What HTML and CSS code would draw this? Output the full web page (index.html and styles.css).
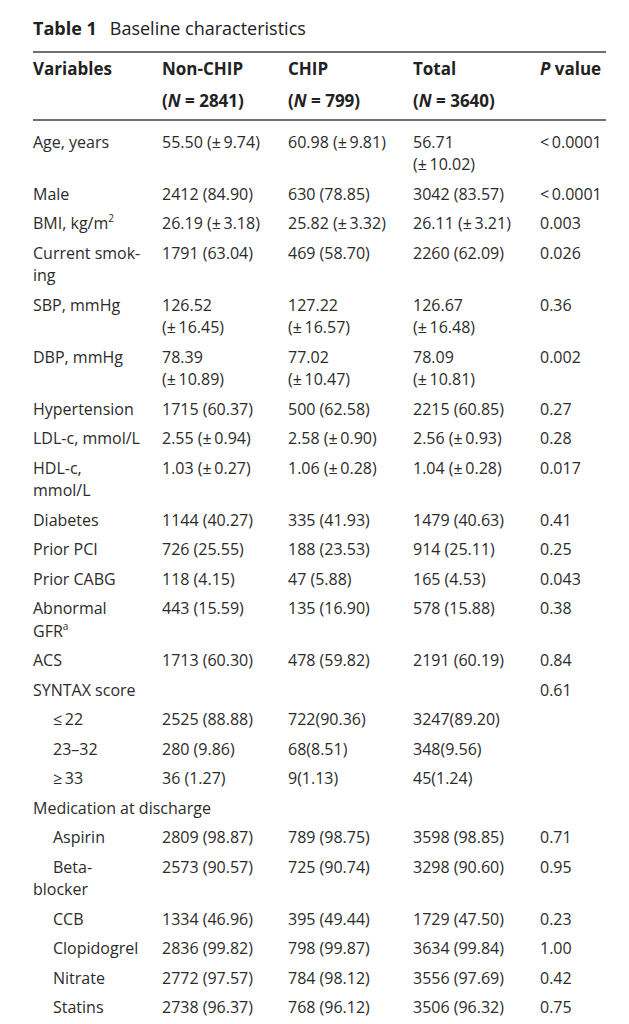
FILE: index.html
```html
<!DOCTYPE html>
<html lang="en">
<head>
<meta charset="utf-8">
<title>Table 1 Baseline characteristics</title>
<link rel="stylesheet" href="styles.css">
</head>
<body>
<div class="page">
  <h1 class="caption"><span class="label">Table 1</span>Baseline characteristics</h1>
  <table class="data">
    <colgroup>
      <col class="c-var">
      <col class="c-num">
      <col class="c-num2">
      <col class="c-num3">
      <col class="c-p">
    </colgroup>
    <thead>
      <tr>
        <th>Variables</th>
        <th>Non-CHIP<br>(<i>N</i> = 2841)</th>
        <th>CHIP<br>(<i>N</i> = 799)</th>
        <th>Total<br>(<i>N</i> = 3640)</th>
        <th><i>P</i> value</th>
      </tr>
    </thead>
    <tbody>
      <tr class="first"><td>Age, years</td><td>55.50 (±&thinsp;9.74)</td><td>60.98 (±&thinsp;9.81)</td><td>56.71<br>(±&thinsp;10.02)</td><td>&lt;&thinsp;0.0001</td></tr>
      <tr><td>Male</td><td>2412 (84.90)</td><td>630 (78.85)</td><td>3042 (83.57)</td><td>&lt;&thinsp;0.0001</td></tr>
      <tr><td>BMI, kg/m<sup>2</sup></td><td>26.19 (±&thinsp;3.18)</td><td>25.82 (±&thinsp;3.32)</td><td>26.11 (±&thinsp;3.21)</td><td>0.003</td></tr>
      <tr><td>Current smok-<br>ing</td><td>1791 (63.04)</td><td>469 (58.70)</td><td>2260 (62.09)</td><td>0.026</td></tr>
      <tr><td>SBP, mmHg</td><td>126.52<br>(±&thinsp;16.45)</td><td>127.22<br>(±&thinsp;16.57)</td><td>126.67<br>(±&thinsp;16.48)</td><td>0.36</td></tr>
      <tr><td>DBP, mmHg</td><td>78.39<br>(±&thinsp;10.89)</td><td>77.02<br>(±&thinsp;10.47)</td><td>78.09<br>(±&thinsp;10.81)</td><td>0.002</td></tr>
      <tr><td>Hypertension</td><td>1715 (60.37)</td><td>500 (62.58)</td><td>2215 (60.85)</td><td>0.27</td></tr>
      <tr><td>LDL-c, mmol/L</td><td>2.55 (±&thinsp;0.94)</td><td>2.58 (±&thinsp;0.90)</td><td>2.56 (±&thinsp;0.93)</td><td>0.28</td></tr>
      <tr><td>HDL-c,<br>mmol/L</td><td>1.03 (±&thinsp;0.27)</td><td>1.06 (±&thinsp;0.28)</td><td>1.04 (±&thinsp;0.28)</td><td>0.017</td></tr>
      <tr><td>Diabetes</td><td>1144 (40.27)</td><td>335 (41.93)</td><td>1479 (40.63)</td><td>0.41</td></tr>
      <tr><td>Prior PCI</td><td>726 (25.55)</td><td>188 (23.53)</td><td>914 (25.11)</td><td>0.25</td></tr>
      <tr><td>Prior CABG</td><td>118 (4.15)</td><td>47 (5.88)</td><td>165 (4.53)</td><td>0.043</td></tr>
      <tr><td>Abnormal<br>GFR<sup>a</sup></td><td>443 (15.59)</td><td>135 (16.90)</td><td>578 (15.88)</td><td>0.38</td></tr>
      <tr><td>ACS</td><td>1713 (60.30)</td><td>478 (59.82)</td><td>2191 (60.19)</td><td>0.84</td></tr>
      <tr><td>SYNTAX score</td><td></td><td></td><td></td><td>0.61</td></tr>
      <tr class="sub"><td>≤&thinsp;22</td><td>2525 (88.88)</td><td>722(90.36)</td><td>3247(89.20)</td><td></td></tr>
      <tr class="sub"><td>23–32</td><td>280 (9.86)</td><td>68(8.51)</td><td>348(9.56)</td><td></td></tr>
      <tr class="sub"><td>≥&thinsp;33</td><td>36 (1.27)</td><td>9(1.13)</td><td>45(1.24)</td><td></td></tr>
      <tr><td colspan="5">Medication at discharge</td></tr>
      <tr class="sub"><td>Aspirin</td><td>2809 (98.87)</td><td>789 (98.75)</td><td>3598 (98.85)</td><td>0.71</td></tr>
      <tr class="sub"><td>Beta-<br>blocker</td><td>2573 (90.57)</td><td>725 (90.74)</td><td>3298 (90.60)</td><td>0.95</td></tr>
      <tr class="sub"><td>CCB</td><td>1334 (46.96)</td><td>395 (49.44)</td><td>1729 (47.50)</td><td>0.23</td></tr>
      <tr class="sub"><td>Clopidogrel</td><td>2836 (99.82)</td><td>798 (99.87)</td><td>3634 (99.84)</td><td>1.00</td></tr>
      <tr class="sub"><td>Nitrate</td><td>2772 (97.57)</td><td>784 (98.12)</td><td>3556 (97.69)</td><td>0.42</td></tr>
      <tr class="sub"><td>Statins</td><td>2738 (96.37)</td><td>768 (96.12)</td><td>3506 (96.32)</td><td>0.75</td></tr>
    </tbody>
  </table>
</div>
</body>
</html>
```
FILE: styles.css
```css
html, body {
  margin: 0;
  background: #ffffff;
}

body {
  font-family: "Open Sans", "Liberation Sans", sans-serif;
  color: #2b2b2b;
}

.page {
  padding: 16px 23px 0 33px;
}

.caption {
  margin: 0;
  font-size: 18px;
  line-height: 24px;
  font-weight: 400;
  color: #222222;
}

.label {
  font-weight: 700;
  margin-right: 13px;
}

.data {
  margin-top: 11px;
  width: 573px;
  border-collapse: collapse;
  table-layout: fixed;
  font-size: 16px;
}

.c-var { width: 129px; }
.c-num { width: 126px; }
.c-num2 { width: 125px; }
.c-num3 { width: 127px; }
.c-p { width: 66px; }

.data th {
  text-align: left;
  vertical-align: top;
  font-size: 17px;
  font-weight: 700;
  line-height: 32px;
  padding: 0 0 2px 0;
  border-top: 2px solid #707070;
  border-bottom: 2px solid #707070;
  color: #222222;
  white-space: nowrap;
}

.data td {
  vertical-align: top;
  line-height: 22.5px;
  padding: 3.5px 0 3.5px 0;
  white-space: nowrap;
}

.data tr.first td {
  padding-top: 9.75px;
}

.data tr.sub td:first-child {
  text-indent: 20px;
}

.data sup {
  font-size: 10px;
  line-height: 0;
  vertical-align: 7px;
}
```
